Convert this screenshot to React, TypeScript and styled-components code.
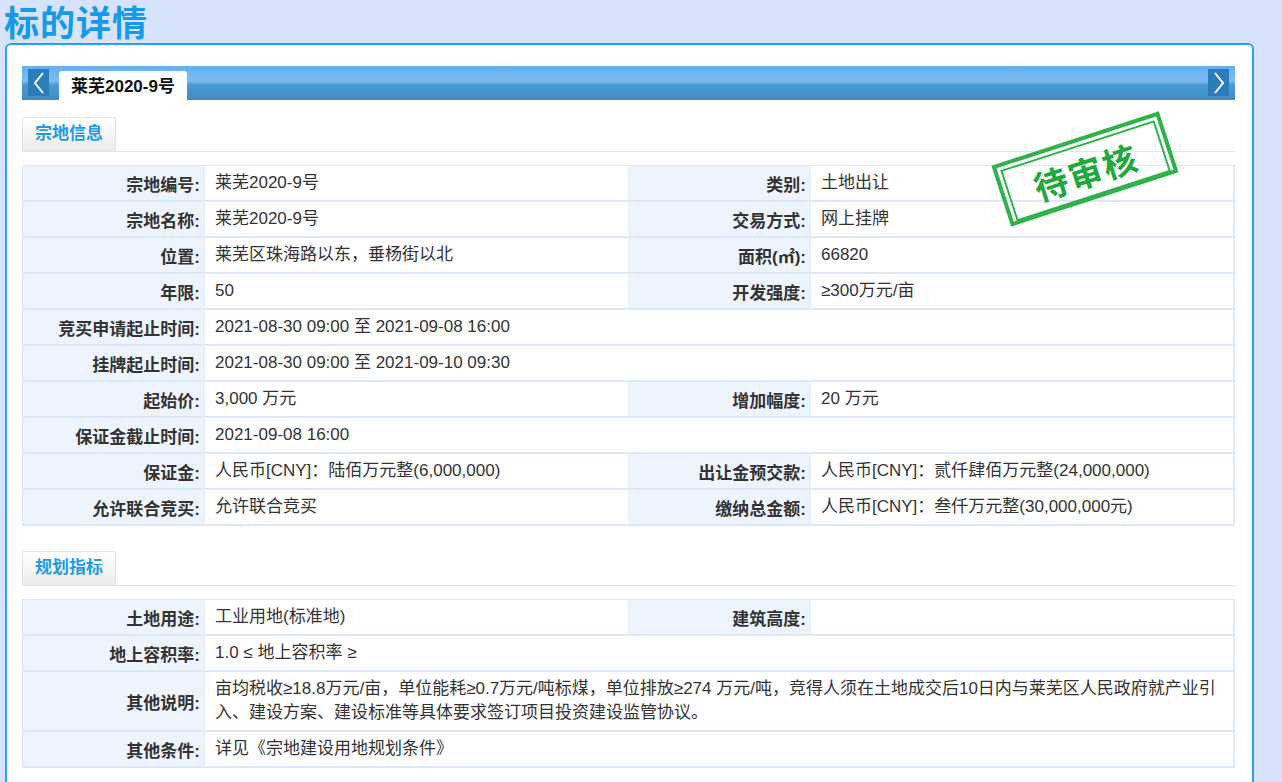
import React from "react";
import styled, { createGlobalStyle } from "styled-components";

const G = createGlobalStyle`
  body { margin: 0; background: #d7e2fc; font-family: Arial, "Liberation Sans", "Noto Sans CJK SC", sans-serif; overflow: hidden; }
`;
const Title = styled.h1`
  margin: 0; padding: 2px 0 0 4px; height: 41px; line-height: 44px;
  font-size: 35px; font-weight: bold; color: #149ae8; letter-spacing: 1px;
`;
const Panel = styled.div`
  margin: 0 28px 0 5px; background: #fff; border: 2px solid #2da2f2; border-radius: 6px;
  padding: 21px 17px 0 15px; height: 760px; position: relative;
`;
const TabBar = styled.div`
  height: 34px; display: flex; align-items: flex-end; justify-content: space-between;
  background: linear-gradient(#62b0f4 0%, #7ebcec 45%, #4a9ad4 55%, #3d8cc2 100%);
`;
const Arrow = styled.div`
  width: 21px; height: 27px; background: #2a7db8; margin: 0 6px 4px 6px;
  display: flex; align-items: center; justify-content: center;
`;
const Tab = styled.div`
  height: 29px; background: #fff; border-radius: 3px 3px 0 0; padding: 0 12px;
  font-size: 17px; font-weight: bold; color: #111; line-height: 31px; margin-right: auto; margin-left: 4px;
`;
const SecHead = styled.div<{ gap?: number }>`
  margin-top: ${p => p.gap ?? 17}px; border-bottom: 1px solid #dde5ee; height: 34px;
`;
const SecBtn = styled.div`
  display: inline-block; width: 94px; height: 34px; box-sizing: border-box;
  background: linear-gradient(#fff, #ececec); border: 1px solid #e3e3e3; border-bottom: none;
  border-radius: 2px 2px 0 0; color: #1e9be4; font-weight: bold; font-size: 17px;
  text-align: center; line-height: 32px;
`;
const Table = styled.div`
  margin-top: 13px; display: grid; grid-template-columns: 182px 424px 182px 1fr;
  border: 1px solid #dce8f8; border-bottom: none;
`;
const L = styled.div`
  background: #eef4fe; text-align: right; font-weight: bold; color: #333; font-size: 17px;
  padding: 0 3px 0 6px; display: flex; align-items: center; justify-content: flex-end;
  border-bottom: 2px solid #dce8f8; border-right: 2px solid #e6eef9; min-height: 34px;
`;
const V = styled.div<{ span?: number }>`
  grid-column: span ${p => p.span || 1}; color: #333; font-size: 17px; padding: 5px 10px;
  display: flex; align-items: center; border-bottom: 2px solid #dce8f8; line-height: 24px;
  border-right: 1px solid #e6eef9;
`;
const Stamp = styled.div`
  position: absolute; left: 990px; top: 92px; width: 176px; height: 64px;
  transform: rotate(-18deg); border: 4px solid #2fb24a; padding: 3px; box-sizing: border-box;
`;
const StampIn = styled.div`
  border: 2px solid #2fb24a; height: 100%; display: flex; align-items: center; justify-content: center;
  color: #22a83c; font-size: 34px; font-weight: bold; font-family: "Noto Sans CJK SC", serif; letter-spacing: 2px;
`;

const Chev = ({ d }: { d: string }) => (
  <svg width="14" height="24" viewBox="0 0 14 24"><path d={d} fill="none" stroke="#fff" strokeWidth="2" /></svg>
);

type R = [string, string, string?, string?];
const rows1: R[] = [
  ["宗地编号:", "莱芜2020-9号", "类别:", "土地出让"],
  ["宗地名称:", "莱芜2020-9号", "交易方式:", "网上挂牌"],
  ["位置:", "莱芜区珠海路以东，垂杨街以北", "面积(㎡):", "66820"],
  ["年限:", "50", "开发强度:", "≥300万元/亩"],
  ["竞买申请起止时间:", "2021-08-30 09:00 至 2021-09-08 16:00"],
  ["挂牌起止时间:", "2021-08-30 09:00 至 2021-09-10 09:30"],
  ["起始价:", "3,000 万元", "增加幅度:", "20 万元"],
  ["保证金截止时间:", "2021-09-08 16:00"],
  ["保证金:", "人民币[CNY]：陆佰万元整(6,000,000)", "出让金预交款:", "人民币[CNY]：贰仟肆佰万元整(24,000,000)"],
  ["允许联合竞买:", "允许联合竞买", "缴纳总金额:", "人民币[CNY]：叁仟万元整(30,000,000元)"],
];
const rows2: R[] = [
  ["土地用途:", "工业用地(标准地)", "建筑高度:", ""],
  ["地上容积率:", "1.0 ≤ 地上容积率 ≥"],
  ["其他说明:", "亩均税收≥18.8万元/亩，单位能耗≥0.7万元/吨标煤，单位排放≥274 万元/吨，竞得人须在土地成交后10日内与莱芜区人民政府就产业引入、建设方案、建设标准等具体要求签订项目投资建设监管协议。"],
  ["其他条件:", "详见《宗地建设用地规划条件》"],
];

const Rows = ({ rows }: { rows: R[] }) => (
  <Table>
    {rows.map((r, i) => (
      <React.Fragment key={i}>
        <L>{r[0]}</L>
        {r[2] !== undefined ? (
          <>
            <V>{r[1]}</V>
            <L>{r[2]}</L>
            <V>{r[3]}</V>
          </>
        ) : (
          <V span={3}>{r[1]}</V>
        )}
      </React.Fragment>
    ))}
  </Table>
);

export default function App() {
  return (
    <>
      <G />
      <Title>标的详情</Title>
      <Panel>
        <TabBar>
          <Arrow><Chev d="M11 2 L3 12 L11 22" /></Arrow>
          <Tab>莱芜2020-9号</Tab>
          <Arrow><Chev d="M3 2 L11 12 L3 22" /></Arrow>
        </TabBar>
        <SecHead><SecBtn>宗地信息</SecBtn></SecHead>
        <Rows rows={rows1} />
        <SecHead gap={25}><SecBtn>规划指标</SecBtn></SecHead>
        <Rows rows={rows2} />
        <Stamp><StampIn>待审核</StampIn></Stamp>
      </Panel>
    </>
  );
}
